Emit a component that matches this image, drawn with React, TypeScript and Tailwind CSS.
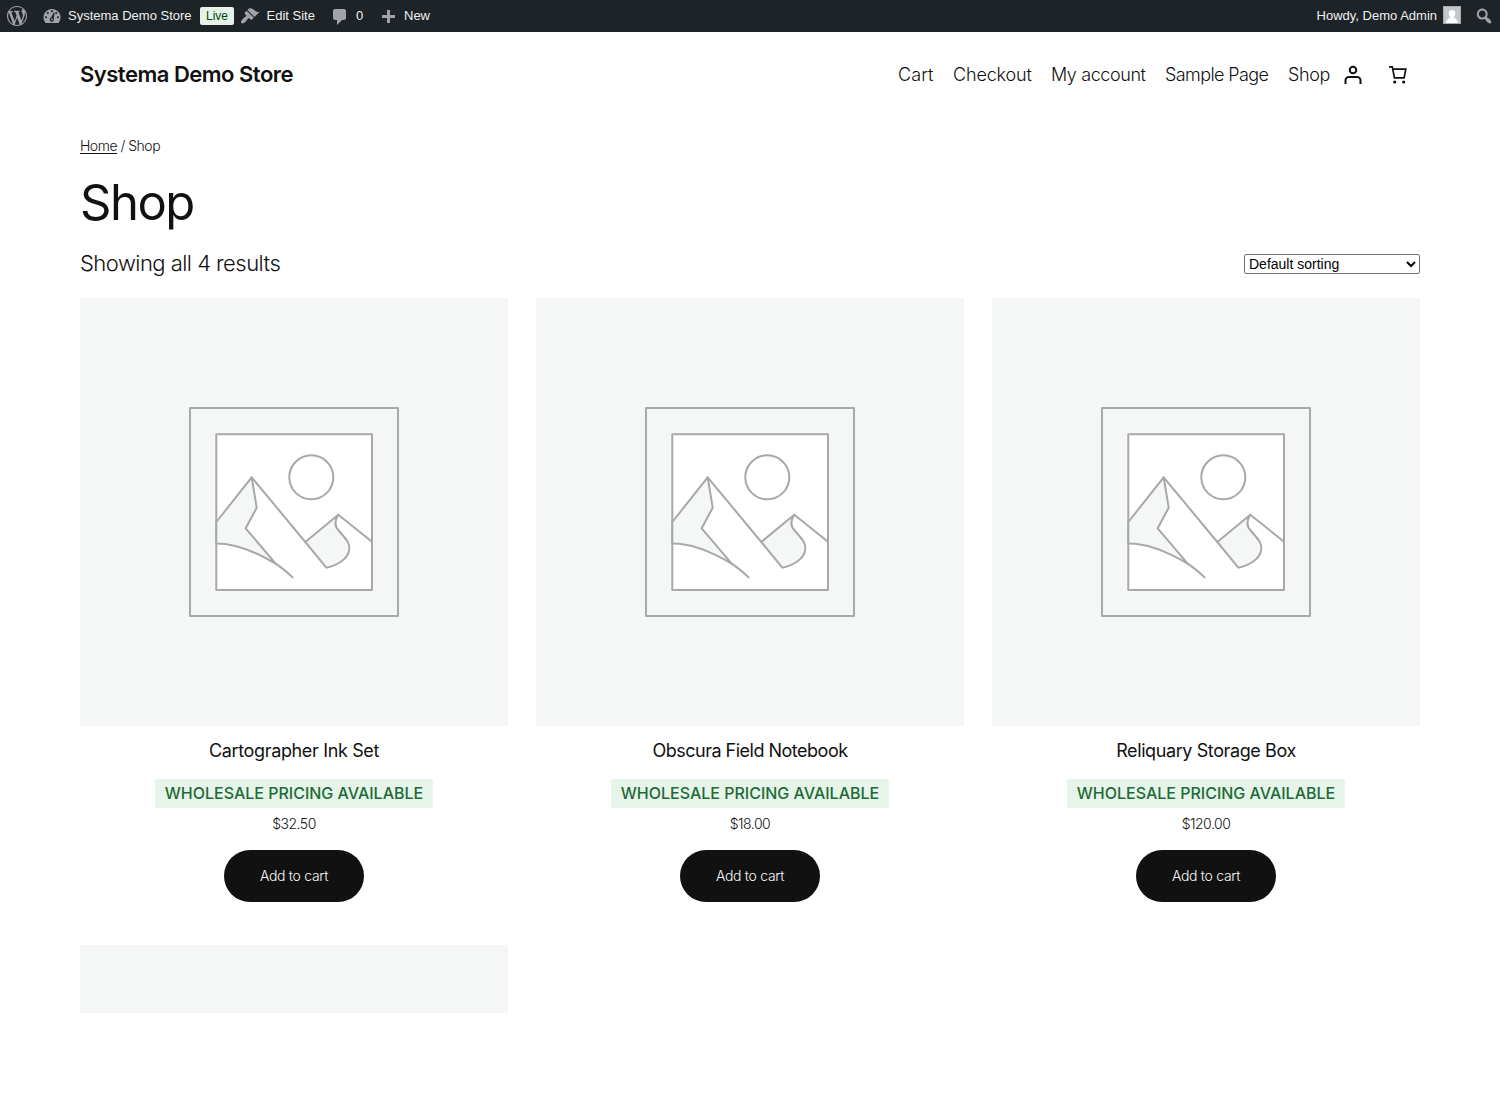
import type { ReactNode } from "react";

const navItems = [
  { label: "Cart", className: "w-[36px] tracking-[0.1px]" },
  { label: "Checkout", className: "w-[79px] tracking-[-0.15px]" },
  { label: "My account", className: "w-[95px] tracking-[-0.4px]" },
  { label: "Sample Page", className: "w-[104px] tracking-[-0.6px]" },
  { label: "Shop", className: "w-[43px] tracking-[-0.4px]" },
];

const products = [
  { name: "Cartographer Ink Set", price: "$32.50", tracking: "tracking-[-0.35px]" },
  { name: "Obscura Field Notebook", price: "$18.00", tracking: "tracking-[-0.5px]" },
  { name: "Reliquary Storage Box", price: "$120.00", tracking: "tracking-[-0.4px]" },
];

const dashicons = {
  wordpress:
    "M20 10c0-5.51-4.49-10-10-10C4.48 0 0 4.49 0 10c0 5.52 4.48 10 10 10 5.51 0 10-4.48 10-10zM7.78 15.37L4.37 6.22c.55-.02 1.17-.08 1.17-.08.5-.06.44-1.13-.06-1.11 0 0-1.45.11-2.37.11-.18 0-.37 0-.58-.01C4.12 2.69 6.87 1.11 10 1.11c2.33 0 4.45.87 6.05 2.34-.68-.11-1.65.39-1.65 1.58 0 .74.45 1.36.9 2.1.35.61.55 1.36.55 2.46 0 1.49-1.4 5-1.4 5l-3.03-8.37c.54-.02.82-.17.82-.17.5-.05.44-1.25-.06-1.22 0 0-1.44.12-2.38.12-.87 0-2.33-.12-2.33-.12-.5-.03-.56 1.2-.06 1.22l.92.08 1.26 3.41zM17.41 10c.24-.64.74-1.87.43-4.25.7 1.29 1.05 2.71 1.05 4.25 0 3.29-1.73 6.24-4.4 7.78.97-2.59 1.94-5.2 2.92-7.78zM6.1 18.09C3.12 16.65 1.11 13.53 1.11 10c0-1.3.23-2.48.72-3.59C3.25 10.3 4.67 14.2 6.1 18.09zm4.03-6.63l2.58 6.98c-.86.29-1.76.45-2.71.45-.79 0-1.57-.11-2.29-.33.81-2.38 1.62-4.74 2.42-7.1z",
  appearance:
    "M14.48 11.06L7.41 3.99l1.5-1.5c.5-.56 2.3-.47 3.51.32 1.21.8 1.43 1.28 2.91 2.1 1.18.64 2.45 1.26 4.45.85zm-.71.71L6.7 4.7 4.93 6.47c-.39.39-.39 1.02 0 1.41l1.06 1.06c.39.39.39 1.03 0 1.42-.6.6-1.43 1.11-2.21 1.69-.35.26-.7.53-1.01.84C1.43 14.23.4 16.08 1.4 17.07c.99 1 2.84-.03 4.18-1.36.31-.31.58-.66.85-1.02.57-.78 1.08-1.61 1.69-2.21.39-.39 1.02-.39 1.41 0l1.06 1.06c.39.39 1.02.39 1.41 0z",
  comments:
    "M5 2h9c1.1 0 2 .9 2 2v7c0 1.1-.9 2-2 2h-2l-5 5v-5H5c-1.1 0-2-.9-2-2V4c0-1.1.9-2 2-2z",
  plus: "M17 7v3h-5v5H9v-5H4V7h5V2h3v5h5z",
  search:
    "M12.14 4.18c1.87 1.87 2.11 4.75.72 6.89.12.1.22.21.36.31.2.16.47.36.81.59.34.24.56.39.66.47.42.31.73.57.94.78.32.32.6.65.84 1 .25.35.44.69.59 1.04.14.35.21.68.18 1-.02.32-.14.59-.36.81s-.49.34-.81.36c-.31.02-.65-.04-.99-.19-.35-.14-.7-.34-1.04-.59-.35-.24-.68-.52-1-.84-.21-.21-.47-.52-.77-.93-.1-.13-.25-.35-.47-.66-.22-.32-.4-.57-.56-.78-.16-.2-.29-.35-.44-.5-2.07 1.09-4.69.76-6.44-.98-2.14-2.15-2.14-5.64 0-7.78 2.15-2.15 5.63-2.15 7.78 0zm-1.41 6.36c1.36-1.37 1.36-3.58 0-4.95-1.37-1.37-3.59-1.37-4.95 0-1.37 1.37-1.37 3.58 0 4.95 1.36 1.37 3.58 1.37 4.95 0z",
};

function Dashicon({ name, className = "" }: { name: keyof typeof dashicons; className?: string }) {
  return (
    <svg viewBox="0 0 20 20" className={`size-5 shrink-0 fill-[#a0a4a9] ${className}`}>
      <path d={dashicons[name]} />
    </svg>
  );
}

function DashboardIcon() {
  return (
    <svg viewBox="0 0 20 20" className="size-5 shrink-0">
      <path
        className="fill-[#a0a4a9]"
        d="M3.76 17h12.48c1.34-1.42 2.26-3.39 2.26-5.62C18.5 6.75 14.69 3 10 3s-8.5 3.75-8.5 8.38c0 2.23.92 4.2 2.26 5.62z"
      />
      <g className="fill-[#1d2327]">
        <circle cx="10" cy="5.2" r="1.05" />
        <circle cx="5.8" cy="7" r="1.05" />
        <circle cx="14.2" cy="7" r="1.05" />
        <circle cx="4" cy="11.2" r="1.05" />
        <circle cx="16" cy="11.2" r="1.05" />
        <path d="M11.8 6.6l.8.3-.9 5.6a2.1 2.1 0 1 1-2.6-.9z" />
      </g>
      <circle cx="10" cy="13.4" r="0.9" className="fill-[#a0a4a9]" />
    </svg>
  );
}

function BarItem({ children, className }: { children: ReactNode; className: string }) {
  return <a className={`flex items-center whitespace-nowrap ${className}`}>{children}</a>;
}

function AdminBar() {
  return (
    <div className="flex h-8 items-center justify-between bg-[#1d2327] pr-[6px] pl-[7px] font-['Liberation_Sans',Arial,sans-serif] text-[13px] text-[#f0f0f1]">
      <div className="flex items-center">
        <BarItem className="w-[35px]">
          <Dashicon name="wordpress" />
        </BarItem>
        <BarItem className="w-[158px] gap-[6px]">
          <DashboardIcon />
          Systema Demo Store
        </BarItem>
        <span className="mr-[6px] flex h-[18px] w-[34px] items-center justify-center rounded-[2px] bg-[#e6f2e8] text-[12px] text-[#00450c]">
          Live
        </span>
        <BarItem className="w-[90px] gap-[6.5px]">
          <Dashicon name="appearance" />
          Edit Site
        </BarItem>
        <BarItem className="w-[48px] gap-[6px]">
          <Dashicon name="comments" className="mt-[2px]" />0
        </BarItem>
        <BarItem className="gap-[6px]">
          <Dashicon name="plus" className="mt-[3px]" />
          New
        </BarItem>
      </div>
      <div className="flex items-center">
        <BarItem className="mr-[13px] gap-[6px]">
          Howdy, Demo Admin
          <svg viewBox="0 0 18 18" className="mb-[2px] size-[18px]">
            <path fill="#c4c6c8" d="M0 0h18v18H0z" />
            <path
              fill="#fff"
              d="M9 4c2.2 0 3.4 1.6 3.3 3.8-.1 1.5-.7 2.6-1.5 3.3v.8c2 .5 3.6 1.5 4 4.6v.5H3.2v-.5c.4-3.1 2-4.1 4-4.6v-.8C6.4 10.4 5.8 9.3 5.7 7.8 5.6 5.6 6.8 4 9 4z"
            />
            <path fill="none" stroke="#a7aaad" d="M.5.5h17v17H.5z" />
          </svg>
        </BarItem>
        <Dashicon name="search" />
      </div>
    </div>
  );
}

function Header() {
  return (
    <header className="flex h-[86px] items-center justify-between">
      <a className="-mt-[2px] text-[22px] font-semibold tracking-[-0.5px]">Systema Demo Store</a>
      <div className="flex items-center">
        <nav className="-mt-[2px] flex gap-[19px] text-[18px] font-light">
          {navItems.map((item) => (
            <a key={item.label} className={`whitespace-nowrap ${item.className}`}>
              {item.label}
            </a>
          ))}
        </nav>
        <svg viewBox="0 0 18 20" className="mr-[27px] ml-[13px] h-5 w-[18px] fill-none stroke-[#111] stroke-2">
          <circle cx="9" cy="5" r="3.3" />
          <path d="M1.5 19v-3.5A3.5 3.5 0 0 1 5 12h8a3.5 3.5 0 0 1 3.5 3.5V19" />
        </svg>
        <svg viewBox="0 0 18 20" className="mr-[13px] h-5 w-[18px]">
          <path
            d="M0 1.900h3.300l2.200 10.900h9.600l1.700-8.600H3.900"
            className="fill-none stroke-[#111] stroke-[1.7]"
          />
          <circle cx="5.7" cy="17" r="1.6" fill="#111" />
          <circle cx="14.7" cy="17" r="1.6" fill="#111" />
        </svg>
      </div>
    </header>
  );
}

function PlaceholderImage() {
  return (
    <svg viewBox="0 0 428 428" className="block size-[428px] bg-[#f5f7f7]">
      <g className="stroke-[#a7a9a9] stroke-2" strokeLinejoin="round" strokeLinecap="round" fill="none">
        <path d="M110 110h208v208H110z" />
        <path fill="#fff" d="M136.3 136.3h155.700v155.700H136.300z" />
        <circle cx="231.3" cy="179.3" r="22" />
        <path
          fill="#f5f7f7"
          d="M136.3 224l35.400-44.700 5 30.400-11 20.600 30 35.400c-20-12-42-20.200-59.400-20.200z"
        />
        <path d="M195.700 265.700c6 4 11 8.200 16.800 13.600M171.700 179.300l53.600 64.700" />
        <path
          fill="#f5f7f7"
          d="M225.300 244l33-27.300c-4 6-3.600 12 .7 16.300 6 7 11 11 10.300 18.300-1 9.700-12 16-23 18.400z"
        />
        <path d="M258.300 216.700l33.700 27" />
      </g>
    </svg>
  );
}

function ProductCard({ name, price, tracking }: (typeof products)[number]) {
  return (
    <li className="flex flex-col items-center">
      <PlaceholderImage />
      <h2 className={`mt-[12px] h-[26px] text-[18px] leading-[26px] ${tracking}`}>{name}</h2>
      <span className="mt-[15px] flex h-[29px] w-[278px] items-center justify-center rounded-[3px] bg-[#e6f4ea] pb-px text-[16px] font-medium tracking-[-0.01px] whitespace-nowrap text-[#1e6b35]">
        WHOLESALE PRICING AVAILABLE
      </span>
      <span className="mt-[6px] h-5 text-[14px] leading-5 font-light tracking-[-0.5px]">{price}</span>
      <button className="mt-4 h-[52px] w-[140px] rounded-full bg-[#111] pb-[2px] text-[14px] font-light tracking-[-0.3px] text-[#f9f9f9]">
        Add to cart
      </button>
    </li>
  );
}

export default function App() {
  return (
    <div className="h-[1100px] overflow-hidden bg-white font-['Inter',sans-serif] text-[#111]">
      <AdminBar />
      <div className="px-20">
        <Header />
        <main>
          <nav className="mt-[18px] h-5 text-[14px] leading-5 font-light tracking-[-0.5px]">
            <a className="underline underline-offset-2">Home</a> / Shop
          </nav>
          <h1 className="mt-[14px] h-[66px] text-[49px] leading-[66px] tracking-[-1.5px]">Shop</h1>
          <div className="mt-[10px] flex h-9 items-center justify-between">
            <p className="-mt-[2px] text-[22px] font-light tracking-[-0.53px]">Showing all 4 results</p>
            <select className="h-5 w-[176px] appearance-auto rounded-[2px] border border-[#767676] bg-white font-['Liberation_Sans',Arial,sans-serif] text-[14px] text-black">
              <option>Default sorting</option>
            </select>
          </div>
          <ul className="mt-[16px] grid grid-cols-3 gap-7">
            {products.map((product) => (
              <ProductCard key={product.name} {...product} />
            ))}
          </ul>
          <div className="mt-[43px] h-[68px] w-[428px] bg-[#f5f7f7]" />
        </main>
      </div>
    </div>
  );
}
